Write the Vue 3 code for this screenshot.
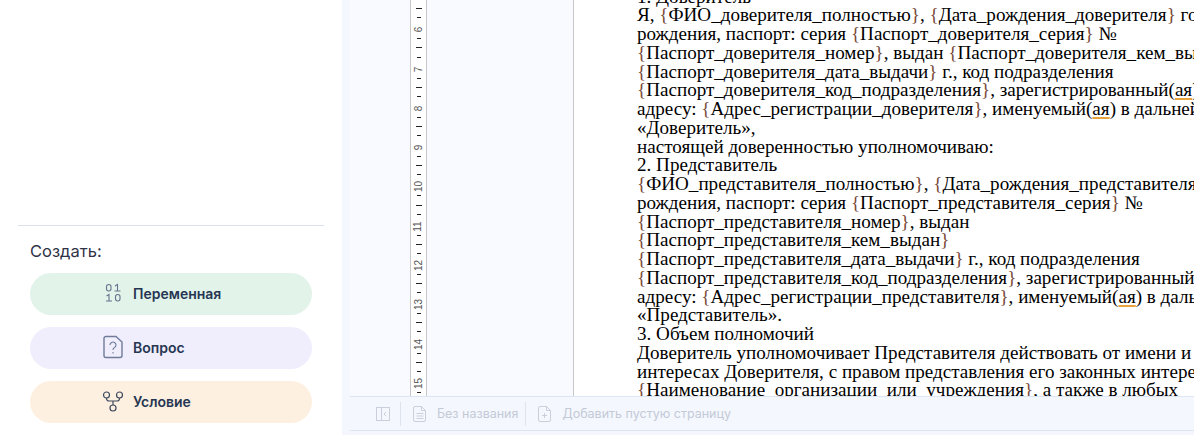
<template>
  <div class="app">
    <aside class="side">
      <div class="create">
        <div class="createTitle">Создать:</div>
        <button class="btn green">
          <svg class="ico" width="24" height="24" viewBox="0 0 24 24" fill="none" stroke="#66758c" stroke-width="1.1">
            <rect x="5.500" y="3.500" width="4.500" height="6.500" rx="2.200" />
            <path d="M14 5l2.500-1.500V10M13.500 10h6" />
            <path d="M5.500 15l2.500-1.500V20M5 20h6" />
            <rect x="14.500" y="13.500" width="4.500" height="6.500" rx="2.200" />
          </svg>
          Переменная
        </button>
        <button class="btn violet">
          <svg class="ico" width="24" height="24" viewBox="0 0 24 24" fill="none" stroke="#6f7b98" stroke-width="1.400">
            <path d="M5 1.500h10l6 5.500v13.500a2 2 0 0 1-2 2H5a2 2 0 0 1-2-2V3.500a2 2 0 0 1 2-2z" />
            <path d="M9 10a3 3 0 1 1 4.500 2.600c-1 .6-1.500 1.100-1.500 2.400" stroke-width="1.100" />
            <path d="M12 17v1.500" stroke-width="1.100" />
          </svg>
          Вопрос
        </button>
        <button class="btn orange">
          <svg class="ico" width="24" height="24" viewBox="0 0 24 24" fill="none" stroke="#3f4a5e" stroke-width="1.200">
            <circle cx="5.500" cy="6" r="3" />
            <circle cx="18.500" cy="6" r="3" />
            <circle cx="12" cy="19" r="3" />
            <path d="M5.500 9v.500a2.500 2.500 0 0 0 2.500 2.500h8a2.500 2.500 0 0 0 2.500-2.500V9M12 12v4" />
          </svg>
          Условие
        </button>
      </div>
    </aside>

    <main class="editor">
      <div class="workspace">
        <div class="ruler">
          <div class="rulerInner">
            <template v-for="n in ticks" :key="n.id">
              <span v-if="n.label" class="num">{{ n.label }}</span>
              <span v-else class="tickSlot"><span class="tick" :class="{ long: n.long }"></span></span>
            </template>
          </div>
        </div>
        <div class="page">
          <div class="text">
            <p v-for="(line, i) in lines" :key="i"><template v-for="(part, j) in split(line)" :key="j"><span v-if="part.t === 'b'" class="brace">{{ part.s }}</span><span v-else-if="part.t === 'w'" class="wavy">{{ part.s }}</span><template v-else>{{ part.s }}</template></template></p>
          </div>
        </div>
      </div>
      <footer class="status">
        <svg class="sico first" width="16" height="16" viewBox="0 0 16 16" fill="none" stroke="#c9d0dc">
          <rect x="1.500" y="1.500" width="13" height="13" />
          <path d="M6.500 1.500v13M11 6l-2 2 2 2" />
        </svg>
        <span class="sep"></span>
        <svg class="sico" width="16" height="18" viewBox="0 0 16 18" fill="none" stroke="#c9d0dc">
          <path d="M3 1.500h6.500l4 4V15a1.500 1.500 0 0 1-1.500 1.500H3A1.500 1.500 0 0 1 1.500 15V3A1.500 1.500 0 0 1 3 1.500z" />
          <path d="M9.500 1.500v4h4M4.500 8.500h7M4.500 11h7M4.500 13.500h7" />
        </svg>
        <span class="slabel name">Без названия</span>
        <span class="sep"></span>
        <svg class="sico" width="16" height="18" viewBox="0 0 16 18" fill="none" stroke="#c9d0dc">
          <path d="M3 1.500h6.500l4 4V15a1.500 1.500 0 0 1-1.500 1.500H3A1.500 1.500 0 0 1 1.500 15V3A1.500 1.500 0 0 1 3 1.500z" />
          <path d="M9.500 1.500v4h4M7.500 8v5M5 10.500h5" />
        </svg>
        <span class="slabel add">Добавить пустую страницу</span>
      </footer>
    </main>
  </div>
</template>

<script setup>
// ruler: number, short, long, short for every centimetre
const ticks = [];
for (let cm = 5; cm <= 15; cm++) {
  ticks.push({ id: cm + "a", label: String(cm) });
  ticks.push({ id: cm + "b", long: false });
  ticks.push({ id: cm + "c", long: true });
  ticks.push({ id: cm + "d", long: false });
}

const lines = [
  "1. Доверитель",
  "Я, {ФИО_доверителя_полностью}, {Дата_рождения_доверителя} года",
  "рождения, паспорт: серия {Паспорт_доверителя_серия} №",
  "{Паспорт_доверителя_номер}, выдан {Паспорт_доверителя_кем_выдан},",
  "{Паспорт_доверителя_дата_выдачи} г., код подразделения",
  "{Паспорт_доверителя_код_подразделения}, зарегистрированный(~ая~) по",
  "адресу: {Адрес_регистрации_доверителя}, именуемый(~ая~) в дальнейшем",
  "«Доверитель»,",
  "настоящей доверенностью уполномочиваю:",
  "2. Представитель",
  "{ФИО_представителя_полностью}, {Дата_рождения_представителя} года",
  "рождения, паспорт: серия {Паспорт_представителя_серия} №",
  "{Паспорт_представителя_номер}, выдан",
  "{Паспорт_представителя_кем_выдан}",
  "{Паспорт_представителя_дата_выдачи} г., код подразделения",
  "{Паспорт_представителя_код_подразделения}, зарегистрированный(~ая~) по",
  "адресу: {Адрес_регистрации_представителя}, именуемый(~ая~) в дальнейшем",
  "«Представитель».",
  "3. Объем полномочий",
  "Доверитель уполномочивает Представителя действовать от имени и в",
  "интересах Доверителя, с правом представления его законных интересов в",
  "{Наименование_организации_или_учреждения}, а также в любых",
];

function split(line) {
  const out = [];
  for (const s of line.split(/([{}]|~[^~]+~)/)) {
    if (!s) continue;
    if (s === "{" || s === "}") out.push({ t: "b", s });
    else if (s[0] === "~") out.push({ t: "w", s: s.slice(1, -1) });
    else out.push({ t: "x", s });
  }
  return out;
}
</script>

<style>
html, body { margin: 0; height: 100%; overflow: hidden; background: #fff; }
</style>

<style scoped>
.app { width: 1194px; height: 435px; display: flex; overflow: hidden; font-family: Inter, "Noto Sans", sans-serif; }

.side { width: 342px; flex: none; box-sizing: border-box; padding: 0 18px 12px 18px; display: flex; flex-direction: column; justify-content: flex-end; background: #fff; }
.create { border-top: 1px solid #d9e1ec; padding: 15px 12px 0 12px; width: 306px; box-sizing: border-box; }
.createTitle { font-size: 16.500px; line-height: 20px; color: #2f3346; margin-bottom: 12px; }
.btn { display: flex; align-items: center; gap: 8px; width: 282px; height: 42px; border: 0; border-radius: 21px; margin-bottom: 12px; padding: 0 0 2px 71px; font-family: inherit; font-size: 14px; font-weight: 600; color: #263652; }
.btn:last-child { margin-bottom: 0; }
.ico { flex: none; }
.green { background: #e2f3ea; }
.violet { background: #f0eefd; }
.orange { background: #fdf0e0; }

.editor { flex: 1; min-width: 0; display: flex; flex-direction: column; padding-left: 8px; padding-bottom: 4px; background: #f4f7fe; }
.workspace { flex: 1; min-height: 0; display: flex; background: #f8faff; overflow: hidden; padding-left: 60px; }

.ruler { width: 15px; flex: none; background: #fff; border-left: 1px solid #c8c8c8; border-right: 1px solid #c8c8c8; overflow: hidden; }
.rulerInner { display: flex; flex-direction: column; align-items: center; margin-top: -17px; }
.tickSlot { height: 9.100px; flex: none; display: flex; align-items: center; justify-content: center; }
.tick { display: block; height: 1px; width: 4px; background: #222; }
.tick.long { width: 6px; }
.num { height: 12px; font: 10px/12px "Liberation Sans", sans-serif; color: #555; transform: translateY(1.500px) rotate(-90deg); flex: none; }

.page { width: 621px; margin-left: 146px; flex: none; background: #fff; border-left: 1px solid #c8c8c8; overflow: hidden; }
.text { padding: 0 0 0 63px; margin-top: -12.500px; width: 640px; font: 19.100px/18.750px "Liberation Serif", serif; color: #000; white-space: nowrap; }
.text p { margin: 0; height: 18.750px; }
.brace { color: #7a4a38; }
.wavy { text-decoration: underline #e9a43c 2px; text-underline-offset: 2px; }

.status { height: 35px; flex: none; display: flex; align-items: center; border-top: 1px solid #dce6f3; border-bottom: 1px solid #dce6f3; box-sizing: border-box; background: #f4f7fe; }
.sico { flex: none; }
.first { margin-left: 25px; margin-right: 9px; }
.sep { width: 1px; height: 24px; background: #dde4ee; flex: none; }
.sep + .sico { margin-left: 11px; }
.slabel { font-size: 12.500px; color: #c3cad6; }
.name { margin-left: 9px; margin-right: 7px; }
.add { margin-left: 9px; }
</style>
